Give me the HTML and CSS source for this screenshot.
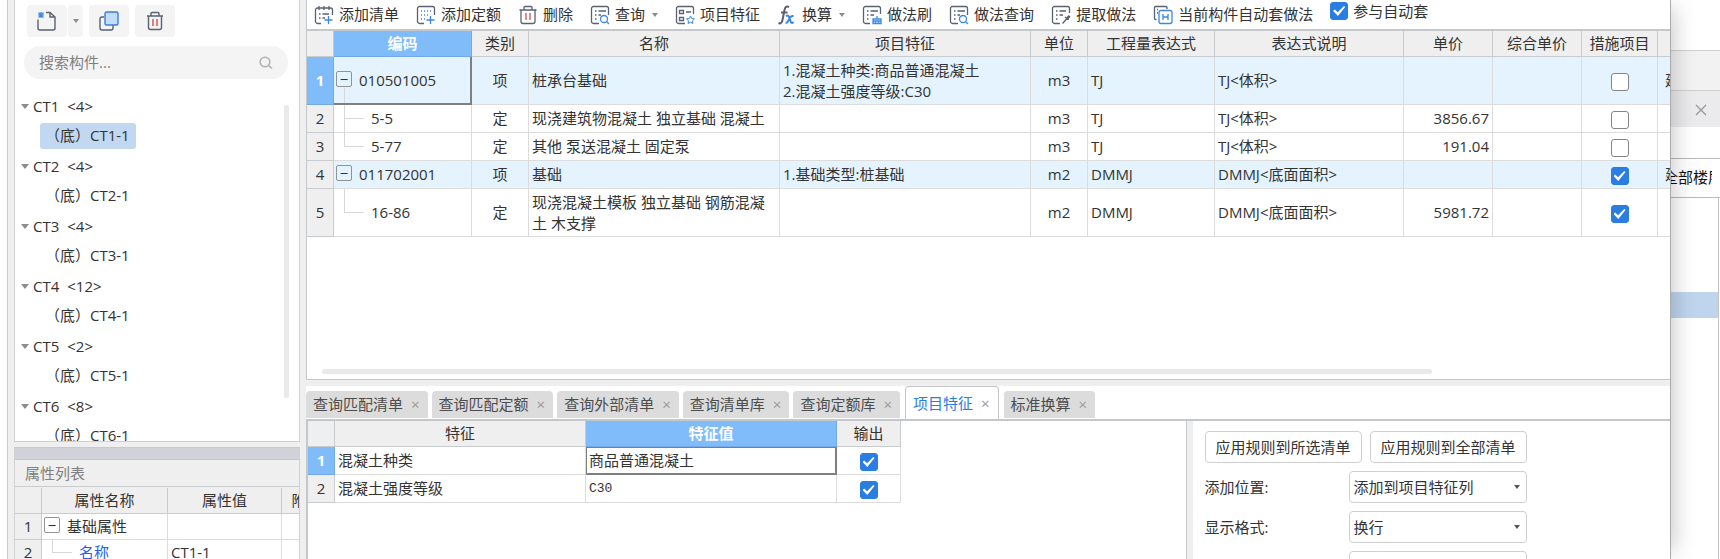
FILE: index.html
```html
<!DOCTYPE html>
<html lang="zh-CN">
<head>
    <meta charset="UTF-8">
    <meta name="viewport" content="width=device-width, initial-scale=1.0">
    <title>构件做法</title>
    <link rel="stylesheet" href="styles.css">
</head>
<body>
    <div class="gutter"></div>
    <div class="window">
        <aside class="sidebar">
            <section class="components">
                <div class="side-tools">
                    <div class="split">
                        <button class="tool-btn" aria-label="新建">
                            <svg width="20" height="20" viewBox="0 0 20 20" fill="none"><path d="M1 8.500V17a2 2 0 0 0 2 2h13a2 2 0 0 0 2-2V6l-5-4.500H9" stroke="#5a6170" stroke-width="1.400"/><path d="M13 1.500V6h5" stroke="#5a6170" stroke-width="1.400"/><path d="M4 1v6M1 4h6M1.500 1.500l5 5M6.500 1.500l-5 5" stroke="#3b87e4" stroke-width="1.200"/></svg>
                        </button>
                        <button class="tool-btn drop" aria-label="新建选项"><span class="caret"></span></button>
                    </div>
                    <button class="tool-btn" aria-label="复制">
                        <svg width="20" height="20" viewBox="0 0 20 20" fill="none"><path d="M5 6H3a2 2 0 0 0-2 2v9a2 2 0 0 0 2 2h9a2 2 0 0 0 2-2v-3" stroke="#5a6170" stroke-width="1.400"/><rect x="6" y="1" width="13" height="13" rx="1.500" fill="#c3dcfa" stroke="#3a7ed2" stroke-width="1.400"/></svg>
                    </button>
                    <button class="tool-btn" aria-label="删除">
                        <svg width="20" height="20" viewBox="0 0 20 20" fill="none"><path d="M2 5h16M6 5V2.500A1 1 0 0 1 7 1.500h6a1 1 0 0 1 1 1V5M3.500 5v11.500a2 2 0 0 0 2 2h9a2 2 0 0 0 2-2V5" stroke="#5a6170" stroke-width="1.400"/><path d="M8 8v7M12 8v7" stroke="#d94a4a" stroke-width="1.400"/></svg>
                    </button>
                </div>
                <label class="search">
                    <input type="text" placeholder="搜索构件..." aria-label="搜索构件">
                    <svg width="14" height="14" viewBox="0 0 14 14" fill="none" stroke="#b0b0b0" stroke-width="1.600"><circle cx="6" cy="6" r="4.800"/><path d="M9.500 9.500l3.500 3"/></svg>
                </label>
                <div class="tree-wrap">
                    <ul class="tree">
                        <li class="group"><span class="caret"></span>CT1 <span>&lt;4&gt;</span></li>
                        <li><span class="leaf selected">（底）CT1-1</span></li>
                        <li class="group"><span class="caret"></span>CT2 <span>&lt;4&gt;</span></li>
                        <li><span class="leaf">（底）CT2-1</span></li>
                        <li class="group"><span class="caret"></span>CT3 <span>&lt;4&gt;</span></li>
                        <li><span class="leaf">（底）CT3-1</span></li>
                        <li class="group"><span class="caret"></span>CT4 <span>&lt;12&gt;</span></li>
                        <li><span class="leaf">（底）CT4-1</span></li>
                        <li class="group"><span class="caret"></span>CT5 <span>&lt;2&gt;</span></li>
                        <li><span class="leaf">（底）CT5-1</span></li>
                        <li class="group"><span class="caret"></span>CT6 <span>&lt;8&gt;</span></li>
                        <li><span class="leaf">（底）CT6-1</span></li>
                    </ul>
                    <div class="tree-scroll"></div>
                </div>
            </section>
            <section class="props">
                <div class="props-bar"></div>
                <h2>属性列表</h2>
                <div class="props-grid">
                    <table class="grid">
                        <colgroup><col class="w-no"><col class="w-prop"><col class="w-val"><col class="w-extra"></colgroup>
                        <thead>
                            <tr><th></th><th>属性名称</th><th>属性值</th><th>附加</th></tr>
                        </thead>
                        <tbody>
                            <tr><th>1</th><td class="node"><button class="toggle" aria-label="折叠">−</button>基础属性</td><td></td><td></td></tr>
                            <tr><th>2</th><td class="branch link">名称</td><td>CT1-1</td><td></td></tr>
                        </tbody>
                    </table>
                </div>
            </section>
        </aside>

        <main class="main">
            <section class="bill">
                <div class="toolbar">
                    <button><svg class="icon" viewBox="0 0 20 20"><path class="k" d="M7 18.500H3.500a2 2 0 0 1-2-2V5a2 2 0 0 1 2-2h13a2 2 0 0 1 2 2v5M5 1v4M10 1v4M15 1v4M5 9h1.500M8.500 9H15M5 13h1.500M8.500 13H11"/><path class="b" d="M14.500 11v8M10.500 15h8"/></svg>添加清单</button>
                    <button><svg class="icon" viewBox="0 0 20 20"><path class="k" d="M8 18.500H3.500a2 2 0 0 1-2-2v-13a2 2 0 0 1 2-2h13a2 2 0 0 1 2 2V10"/><path class="b dots" d="M5 6h11M5 10h9M5 14h4"/><path class="b" d="M14.500 11v8M10.500 15h8"/></svg>添加定额</button>
                    <button><svg class="icon" viewBox="0 0 20 20"><path class="k" d="M1.500 5h17M6 5V2.500A1 1 0 0 1 7 1.500h6a1 1 0 0 1 1 1V5M3 5v11.500a2 2 0 0 0 2 2h10a2 2 0 0 0 2-2V5"/><path class="r" d="M8 8v7M12 8v7"/></svg>删除</button>
                    <button><svg class="icon" viewBox="0 0 20 20"><path class="k" d="M9 18.500H3.500a2 2 0 0 1-2-2v-13a2 2 0 0 1 2-2h13a2 2 0 0 1 2 2V10M5 6h1.500M8.500 6H16M5 10h1.500M8.500 10H11M5 14h1.500"/><circle class="b" cx="14" cy="14" r="3.500"/><path class="b" d="M16.500 16.500l2.500 2.500"/></svg>查询<span class="caret"></span></button>
                    <button><svg class="icon" viewBox="0 0 20 20"><path class="k" d="M10 18.500H3.500a2 2 0 0 1-2-2v-13a2 2 0 0 1 2-2h13a2 2 0 0 1 2 2V9M4.500 5.500h4v3h-4zM4.500 12.500h4v3h-4zM11 7h5"/><path class="b star" d="M15.500 11l1.200 2.500 2.800.4-2 1.900.5 2.700-2.500-1.300-2.500 1.300.5-2.700-2-1.900 2.800-.4z"/></svg>项目特征</button>
                    <button><svg class="icon" viewBox="0 0 20 20"><path class="k f" d="M12 2c-3-1.500-4 .5-4.500 3L5.500 15c-.5 3-2 4-4 3M4 7.500h6.500"/><path class="b f" d="M9 11c2-1 3 0 3.500 2l1 3c.5 2 1.500 2.500 3 1M16.500 11.500c-2-1.500-3.500 1-4.500 3s-2 4-3.500 3"/></svg>换算<span class="caret"></span></button>
                    <button><svg class="icon" viewBox="0 0 20 20"><path class="k" d="M8 18.500H3.500a2 2 0 0 1-2-2v-13a2 2 0 0 1 2-2h13a2 2 0 0 1 2 2V9M5 6h1.500M8.500 6H16M5 10h1.500M8.500 10H12M5 14h1.500"/><path class="b" d="M11 18.500V14h8v4.500zM11 16h8M13.500 18v-2M16.500 18v-2M15 14v-3"/></svg>做法刷</button>
                    <button><svg class="icon" viewBox="0 0 20 20"><path class="k" d="M9 18.500H3.500a2 2 0 0 1-2-2v-13a2 2 0 0 1 2-2h13a2 2 0 0 1 2 2V10M5 6h1.500M8.500 6H16M5 10h1.500M8.500 10H11M5 14h1.500"/><circle class="b" cx="14" cy="14" r="3.500"/><path class="b" d="M16.500 16.500l2.500 2.500"/></svg>做法查询</button>
                    <button><svg class="icon" viewBox="0 0 20 20"><path class="k" d="M9 18.500H3.500a2 2 0 0 1-2-2v-13a2 2 0 0 1 2-2h13a2 2 0 0 1 2 2V8M5 6h1.500M8.500 6H15M5 10h1.500M8.500 10H12M5 14h1.500M11.500 18.500l4-4.500M14 12l3.500 3"/><path d="M15 13l2.500-3 2 1.500-2.500 3.500z" fill="#5a6170"/></svg>提取做法</button>
                    <button><svg class="icon" viewBox="0 0 20 20"><path class="k" d="M3.500 14.500h-1a1 1 0 0 1-1-1v-11a1 1 0 0 1 1-1H13a1 1 0 0 1 1 1V4M4 4.500h1M4 8h1"/><rect class="b" x="6" y="5.500" width="13" height="13" rx="2"/><path class="b" d="M10 9v6M15 9v6M10 12h5"/></svg>当前构件自动套做法</button>
                    <label class="auto"><input type="checkbox" checked>参与自动套</label>
                </div>
                <div class="bill-grid">
                    <table class="grid">
                        <colgroup>
                            <col class="w-no"><col class="w-code"><col class="w-kind"><col class="w-name"><col class="w-name"><col class="w-kind">
                            <col class="w-expr"><col class="w-desc"><col class="w-price"><col class="w-price"><col class="w-step"><col class="w-major">
                        </colgroup>
                        <thead>
                            <tr><th></th><th class="active">编码</th><th>类别</th><th>名称</th><th>项目特征</th><th>单位</th><th>工程量表达式</th><th>表达式说明</th><th>单价</th><th>综合单价</th><th>措施项目</th><th></th></tr>
                        </thead>
                        <tbody>
                            <tr class="item tall">
                                <th class="active">1</th>
                                <td class="node open focus"><button class="toggle" aria-label="折叠">−</button>010501005</td>
                                <td class="mid">项</td><td>桩承台基础</td><td>1.混凝土种类:商品普通混凝土<br>2.混凝土强度等级:C30</td>
                                <td class="mid">m3</td><td>TJ</td><td>TJ&lt;体积&gt;</td><td></td><td></td>
                                <td class="mid"><input type="checkbox" aria-label="措施项目"></td><td class="major">建筑</td>
                            </tr>
                            <tr>
                                <th>2</th><td class="branch more">5-5</td>
                                <td class="mid">定</td><td>现浇建筑物混凝土 独立基础 混凝土</td><td></td>
                                <td class="mid">m3</td><td>TJ</td><td>TJ&lt;体积&gt;</td><td class="num">3856.67</td><td></td>
                                <td class="mid"><input type="checkbox" aria-label="措施项目"></td><td></td>
                            </tr>
                            <tr>
                                <th>3</th><td class="branch">5-77</td>
                                <td class="mid">定</td><td>其他 泵送混凝土 固定泵</td><td></td>
                                <td class="mid">m3</td><td>TJ</td><td>TJ&lt;体积&gt;</td><td class="num">191.04</td><td></td>
                                <td class="mid"><input type="checkbox" aria-label="措施项目"></td><td></td>
                            </tr>
                            <tr class="item">
                                <th>4</th><td class="node"><button class="toggle" aria-label="折叠">−</button>011702001</td>
                                <td class="mid">项</td><td>基础</td><td>1.基础类型:桩基础</td>
                                <td class="mid">m2</td><td>DMMJ</td><td>DMMJ&lt;底面面积&gt;</td><td></td><td></td>
                                <td class="mid"><input type="checkbox" aria-label="措施项目" checked></td><td class="major">建筑</td>
                            </tr>
                            <tr class="tall">
                                <th>5</th><td class="branch">16-86</td>
                                <td class="mid">定</td><td>现浇混凝土模板 独立基础 钢筋混凝土 木支撑</td><td></td>
                                <td class="mid">m2</td><td>DMMJ</td><td>DMMJ&lt;底面面积&gt;</td><td class="num">5981.72</td><td></td>
                                <td class="mid"><input type="checkbox" aria-label="措施项目" checked></td><td></td>
                            </tr>
                        </tbody>
                    </table>
                </div>
                <div class="h-scroll"></div>
            </section>

            <section class="detail">
                <nav class="tabs">
                    <a href="#">查询匹配清单<span>×</span></a>
                    <a href="#">查询匹配定额<span>×</span></a>
                    <a href="#">查询外部清单<span>×</span></a>
                    <a href="#">查询清单库<span>×</span></a>
                    <a href="#">查询定额库<span>×</span></a>
                    <a href="#" class="current">项目特征<span>×</span></a>
                    <a href="#">标准换算<span>×</span></a>
                </nav>
                <div class="detail-body">
                    <div class="features">
                        <table class="grid">
                            <colgroup><col class="w-no"><col class="w-name"><col class="w-name"><col class="w-out"></colgroup>
                            <thead>
                                <tr><th></th><th>特征</th><th class="active">特征值</th><th>输出</th></tr>
                            </thead>
                            <tbody>
                                <tr><th class="active">1</th><td>混凝土种类</td><td class="focus">商品普通混凝土</td><td class="mid"><input type="checkbox" aria-label="输出" checked></td></tr>
                                <tr><th>2</th><td>混凝土强度等级</td><td class="mono">C30</td><td class="mid"><input type="checkbox" aria-label="输出" checked></td></tr>
                            </tbody>
                        </table>
                    </div>
                    <form class="rules">
                        <div class="rule-btns">
                            <button type="button">应用规则到所选清单</button>
                            <button type="button">应用规则到全部清单</button>
                        </div>
                        <div class="rule">
                            <label for="place">添加位置:</label>
                            <div class="select"><select id="place"><option>添加到项目特征列</option></select><span class="caret"></span></div>
                        </div>
                        <div class="rule">
                            <label for="format">显示格式:</label>
                            <div class="select"><select id="format"><option>换行</option></select><span class="caret"></span></div>
                        </div>
                        <div class="rule">
                            <label for="content"></label>
                            <div class="select"><select id="content" aria-label="内容"></select></div>
                        </div>
                    </form>
                </div>
            </section>
        </main>
    </div>

    <div class="behind">
        <div class="behind-top"></div>
        <div class="behind-bar"></div>
        <div class="behind-tab"><button aria-label="关闭"><svg width="12" height="12" viewBox="0 0 12 12" stroke="#999" stroke-width="1.300"><path d="M1 1l10 10M11 1L1 11"/></svg></button></div>
        <div class="behind-blank"></div>
        <div class="behind-floor">全部楼层</div>
        <div class="behind-list"><div class="behind-row"></div></div>
    </div>
</body>
</html>
```
FILE: styles.css
```css
* {
    box-sizing: border-box;
}
body {
    margin: 0;
    height: 100vh;
    display: flex;
    overflow: hidden;
    background: #fff;
    color: #333;
    font: 15px/21px "Open Sans", "Noto Sans CJK SC", sans-serif;
}
button, input, select {
    font: inherit;
    color: inherit;
}
button {
    border: 0;
    padding: 0;
    background: none;
}
.caret {
    flex: none;
    border: 4px solid transparent;
    border-top: 5px solid #8c8c8c;
    border-bottom: 0;
}

/* checkbox */
input[type="checkbox"] {
    appearance: none;
    flex: none;
    display: inline-grid;
    place-items: center;
    width: 18px;
    height: 18px;
    margin: 0;
    border: 1px solid #858585;
    border-radius: 3px;
    background: #fff;
    vertical-align: middle;
}
input[type="checkbox"]:checked {
    border-color: #2a7de1;
    background: #2a7de1;
}
input[type="checkbox"]:checked::before {
    content: "";
    width: 12px;
    height: 10px;
    background: #fff;
    clip-path: polygon(0 50%, 14% 36%, 38% 62%, 90% 0, 100% 10%, 40% 100%);
}

.gutter {
    flex: 0 0 7px;
}
.window {
    flex: 1;
    min-width: 0;
    display: flex;
    gap: 6px;
    padding-left: 6px;
    position: relative;
    z-index: 1;
    background: #efefef;
    border-left: 1px solid #c9cccf;
    border-right: 1px solid #a9abad;
    box-shadow: 12px 0 20px -8px rgba(0, 0, 0, 0.2);
}

/* left side */
.sidebar {
    flex: 0 0 286px;
    min-width: 0;
    display: flex;
    flex-direction: column;
    gap: 5px;
    min-height: 0;
}
.components {
    flex: 1;
    min-height: 0;
    display: flex;
    flex-direction: column;
    background: #fff;
    border: solid #cfd1d4;
    border-width: 0 1px 1px;
}
.side-tools {
    display: flex;
    gap: 6px;
    padding: 5px 12px 9px;
}
.split {
    display: flex;
    gap: 1px;
}
.tool-btn {
    display: grid;
    place-items: center;
    width: 40px;
    height: 32px;
    border-radius: 4px;
    background: #f4f4f4;
}
.tool-btn.drop {
    width: 15px;
}
.drop .caret {
    border-width: 4px 3px 0;
}
.search {
    display: flex;
    align-items: center;
    height: 33px;
    margin: 0 11px 0 9px;
    padding: 0 15px;
    border-radius: 16px;
    background: #f4f4f4;
}
.search input {
    flex: 1;
    min-width: 0;
    padding: 0;
    border: 0;
    outline: 0;
    background: none;
}
.search input::placeholder {
    color: #808080;
}
.tree-wrap {
    flex: 1;
    min-height: 0;
    display: flex;
    padding: 12px 10px 0 6px;
    overflow: hidden;
}
.tree {
    flex: 1;
    margin: 0;
    padding: 0;
    list-style: none;
}
.tree li {
    display: flex;
    align-items: center;
    height: 30px;
}
.tree .group {
    gap: 8px;
}
.tree .caret {
    margin-right: -4px;
}
.leaf {
    margin-left: 19px;
    padding: 2px 6px 3px 5px;
    border-radius: 3px;
}
.leaf.selected {
    background: #c1d8f0;
}
.tree-scroll {
    width: 5px;
    margin: 14px 0 43px;
    border-radius: 3px;
    background: #e9e9e9;
}
.props {
    flex: 0 0 112px;
    overflow: hidden;
    border: solid #cfd1d4;
    border-width: 0 1px;
}
.props-bar {
    height: 13px;
    background: #d1d2d9;
    border-top: 1px solid #c6c8cd;
    border-bottom: 1px solid #c6c8cd;
}
.props h2 {
    margin: 0;
    padding: 3px 10px;
    font-size: 15px;
    line-height: 20px;
    font-weight: normal;
    color: #808080;
    border-bottom: 1px solid #c9cccf;
}
.props-grid {
    margin-top: 1px;
    overflow: hidden;
}

/* grids */
.grid {
    table-layout: fixed;
    width: 0;
    border-collapse: separate;
    border-spacing: 0;
    background: #fff;
}
.grid th, .grid td {
    height: 28px;
    padding: 0 3px;
    border: solid #dcdcdc;
    border-width: 0 1px 1px 0;
    text-align: left;
    overflow: hidden;
}
.grid th {
    padding: 0;
    background: #efefef;
    border-color: #c9cccf;
    font-weight: normal;
    text-align: center;
    white-space: nowrap;
}
.grid thead th {
    height: 26px;
}
.props .grid td {
    height: 26px;
}
.grid tbody th {
    height: auto;
}
.grid th.active {
    background: #80bbfa;
    border-color: #72a9e6;
    color: #fff;
    font-weight: bold;
}
.grid .tall td {
    height: 48px;
}
.grid .item td {
    background-color: #e4f3fe;
}
.grid .mid {
    text-align: center;
}
.grid .num {
    text-align: right;
}
.grid .mono {
    font: 13px "Liberation Mono", monospace;
}
.grid .major {
    padding-left: 7px;
    white-space: nowrap;
}
.grid .focus {
    box-shadow: inset -1px -1px #7d7f80;
    border-color: #7d7f80;
}
.features .focus {
    box-shadow: inset -1px -1px #7d7f80, inset 1px 1px #7d7f80;
}
.grid .open {
    background-image: linear-gradient(#d8d8d8, #d8d8d8);
    background-position: 10px 100%;
    background-size: 1px 16px;
    background-repeat: no-repeat;
}
.grid .node {
    padding-left: 2px;
}
.grid .branch {
    padding-left: 37px;
    background: linear-gradient(#d8d8d8, #d8d8d8) 10px 50% / 20px 1px no-repeat,
        linear-gradient(#d8d8d8, #d8d8d8) 10px 0 / 1px 50% no-repeat;
}
.grid .branch.more {
    background-size: 20px 1px, 1px 100%;
}
.grid .link {
    color: #1f5ff0;
}
.toggle {
    width: 16px;
    height: 16px;
    margin-right: 7px;
    border: 1px solid #8f9499;
    border-radius: 2px;
    line-height: 12px;
    vertical-align: 1px;
}
.w-no { width: 27px; }
.w-code { width: 138px; }
.w-kind { width: 57px; }
.w-name { width: 251px; }
.w-expr { width: 127px; }
.w-desc { width: 189px; }
.w-price { width: 89px; }
.w-step { width: 76px; }
.w-major { width: 60px; }
.w-out { width: 64px; }
.w-prop { width: 126px; }
.w-val { width: 114px; }
.w-extra { width: 50px; }

/* main */
.main {
    flex: 1;
    min-width: 0;
    display: flex;
    flex-direction: column;
    gap: 6px;
}
.bill {
    flex: 1;
    min-height: 0;
    display: flex;
    flex-direction: column;
    background: #fff;
    border: solid #c4c8ca;
    border-width: 0 0 1px 1px;
}
.toolbar {
    display: flex;
    gap: 17px;
    height: 31px;
    padding-left: 7px;
    border-bottom: 2px solid #c4c8ca;
    white-space: nowrap;
}
.toolbar button, .toolbar label {
    display: flex;
    align-items: center;
    gap: 5px;
}
.toolbar .caret {
    margin-left: 2px;
    border-width: 4px 3px 0;
}
.toolbar .auto {
    height: 22px;
}
.icon {
    width: 20px;
    height: 20px;
    fill: none;
    stroke-width: 1.3;
}
.icon .k { stroke: #5a6170; }
.icon .b { stroke: #3b87e4; }
.icon .r { stroke: #d94a4a; }
.icon .f { stroke-width: 2; }
.icon .star { stroke-width: 1; }
.icon .dots { stroke-dasharray: 1 2; }
.bill-grid {
    flex: 1;
    min-height: 0;
    overflow: hidden;
}
.h-scroll {
    height: 5px;
    margin: 0 238px 5px 15px;
    border-radius: 3px;
    background: #e9e9e9;
}

/* lower pane */
.detail {
    flex: 0 0 173px;
    display: flex;
    flex-direction: column;
    min-height: 0;
    background: #fff;
}
.tabs {
    display: flex;
    align-items: flex-end;
    gap: 4px;
    height: 35px;
    border-bottom: 2px solid #c4c8ca;
}
.tabs a {
    display: flex;
    align-items: center;
    gap: 8px;
    height: 27px;
    margin-bottom: 1px;
    padding: 0 8px 0 7px;
    border-radius: 4px 4px 0 0;
    background: #dcdcdc;
    color: #4d4d4d;
    text-decoration: none;
    white-space: nowrap;
}
.tabs span {
    color: #999;
}
.tabs .current {
    height: 33px;
    margin: 0 1px;
    border: 1px solid #c4c8ca;
    border-bottom: 0;
    background: #fff;
    color: #2a7de1;
}
.detail-body {
    flex: 1;
    min-height: 0;
    display: flex;
    gap: 6px;
    background: #efefef;
}
.features {
    flex: 1;
    background: #fff;
    border: solid #c4c8ca;
    border-width: 0 1px 0 2px;
}
.rules {
    flex: 0 0 35%;
    display: flex;
    flex-direction: column;
    gap: 8px;
    padding: 10px 0 0 12px;
    background: #fff;
    overflow: hidden;
}
.rule-btns {
    display: flex;
    gap: 8px;
}
.rules button {
    width: 157px;
    height: 32px;
    border: 1px solid #d0d0d0;
    border-radius: 4px;
    background: #fff;
}
.rule {
    display: flex;
    align-items: center;
}
.rule label {
    width: 144px;
}
.select {
    position: relative;
}
.select select {
    display: block;
    appearance: none;
    width: 178px;
    height: 32px;
    padding: 0 4px;
    border: 1px solid #d0d0d0;
    border-radius: 4px;
    background: #fff;
}
.select .caret {
    position: absolute;
    top: 14px;
    right: 7px;
    border-width: 4px 3px 0;
    border-top-color: #555;
    pointer-events: none;
}

/* window behind */
.behind {
    flex: 0 0 49px;
    display: flex;
    flex-direction: column;
    overflow: hidden;
}
.behind-top {
    height: 50px;
}
.behind-bar {
    height: 40px;
    background: #f2f2f2;
    border-top: 1px solid #d0d0d0;
}
.behind-tab {
    height: 37px;
    padding: 13px 0 0 24px;
    background: #ebebed;
    border-top: 1px solid #d0d0d0;
    line-height: 12px;
}
.behind-tab button {
    display: block;
}
.behind-blank {
    height: 32px;
}
.behind-floor {
    width: 41px;
    height: 38px;
    margin-right: 8px;
    padding: 8px 0;
    text-indent: -8px;
    white-space: nowrap;
    overflow: hidden;
    color: #111;
    box-shadow: 8px 0 #fff, 0 -1px #b8b8b8, 8px -1px #b8b8b8, 0 1px #b8b8b8, 8px 1px #b8b8b8;
}
.behind-list {
    flex: 1;
    margin-right: 1px;
    padding-top: 95px;
    border-right: 1px solid #c4c4c4;
}
.behind-row {
    height: 26px;
    background: #bfd5ee;
}
```
